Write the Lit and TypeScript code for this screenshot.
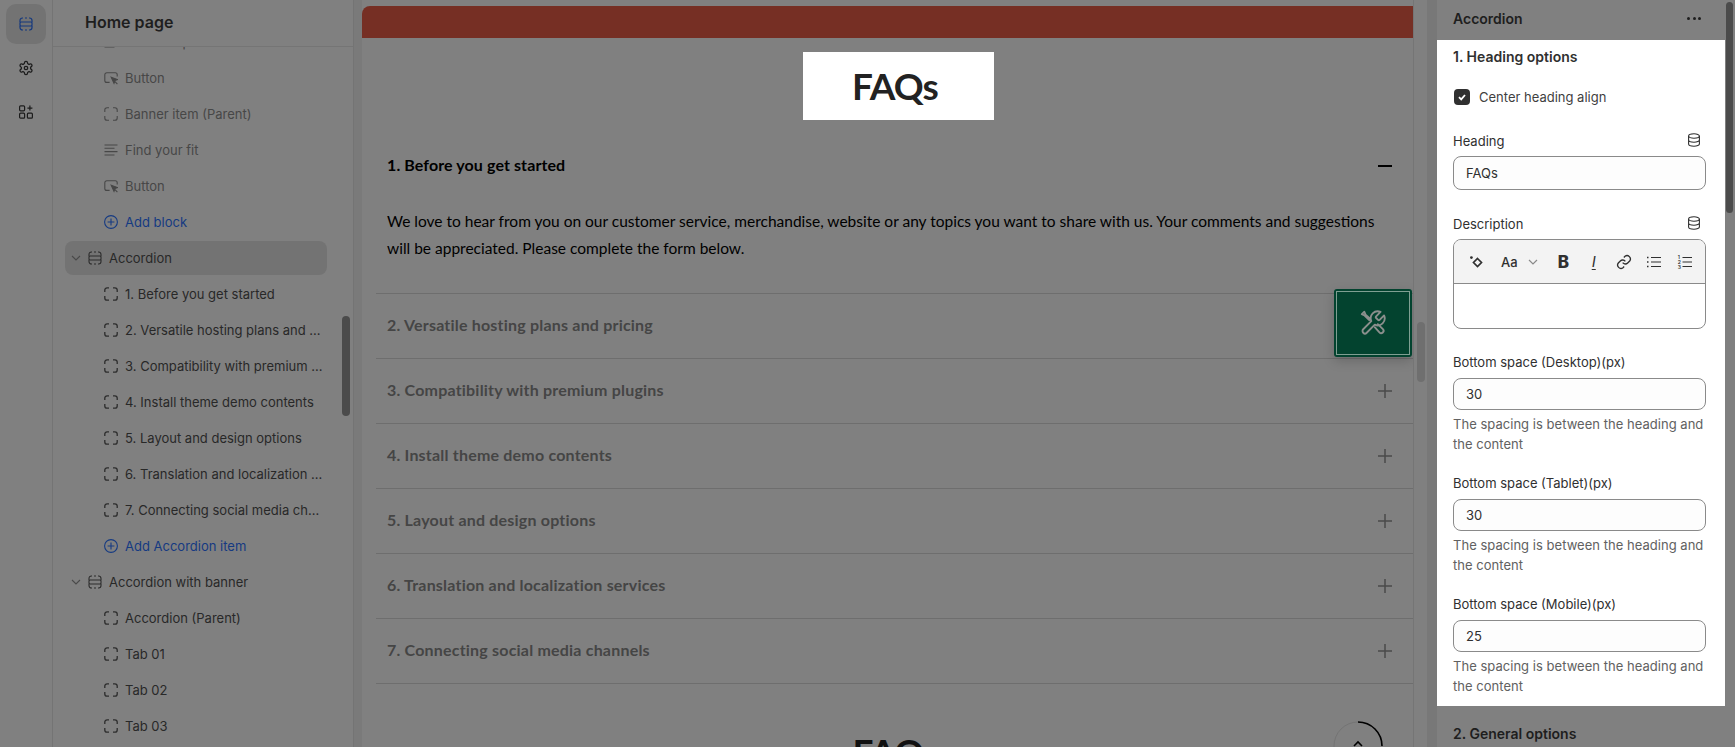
import { LitElement, html, css, svg } from "lit";
import { customElement } from "lit/decorators.js";

const block = svg`<path d="M.8 5V3.1A2.3 2.3 0 0 1 3.1.8H5M9 .8h1.9a2.3 2.3 0 0 1 2.3 2.3V5M13.2 9v1.9a2.3 2.3 0 0 1-2.3 2.3H9M5 13.2H3.1A2.3 2.3 0 0 1 .8 10.9V9"/>`;
const section = svg`<path d="M1 5.2V3.4A2.4 2.4 0 0 1 3.4 1H4M6 1h2M10 1h.6A2.4 2.4 0 0 1 13 3.4v1.8M1 8.8v1.8A2.4 2.4 0 0 0 3.4 13H4M6 13h2M10 13h.6a2.4 2.4 0 0 0 2.4-2.4V8.8"/><rect x="1" y="5" width="12" height="4" rx="1"/>`;
const cursor = svg`<path d="M5.6 11.4H2.8a2 2 0 0 1-2-2V3.8a2 2 0 0 1 2-2h8.4a2 2 0 0 1 2 2V5.6"/><path d="M7.2 6.2l6.4 2.4-2.6 1 -1 2.8z" fill="currentColor"/><path d="M11 10.6l2.4 2.6"/>`;
const lines = svg`<path d="M.5 2h13M.5 5.3h10M.5 8.6h13M.5 12h10"/>`;
const plusc = svg`<circle cx="7" cy="7" r="6.4"/><path d="M7 3.6v6.8M3.6 7h6.8"/>`;

const ic = (p: unknown, c = "ic") => html`<svg class=${c} viewBox="0 0 14 14">${p}</svg>`;

type Row = { t: string; k: "item" | "muted" | "add" | "sec" | "cur"; i?: unknown };
const rows: Row[] = [
  { t: "Discover products", k: "muted", i: lines },
  { t: "Button", k: "muted", i: cursor },
  { t: "Banner item (Parent)", k: "muted", i: block },
  { t: "Find your fit", k: "muted", i: lines },
  { t: "Button", k: "muted", i: cursor },
  { t: "Add block", k: "add", i: plusc },
  { t: "Accordion", k: "cur" },
  { t: "1. Before you get started", k: "item", i: block },
  { t: "2. Versatile hosting plans and ...", k: "item", i: block },
  { t: "3. Compatibility with premium ...", k: "item", i: block },
  { t: "4. Install theme demo contents", k: "item", i: block },
  { t: "5. Layout and design options", k: "item", i: block },
  { t: "6. Translation and localization ...", k: "item", i: block },
  { t: "7. Connecting social media ch...", k: "item", i: block },
  { t: "Add Accordion item", k: "add", i: plusc },
  { t: "Accordion with banner", k: "sec" },
  { t: "Accordion (Parent)", k: "item", i: block },
  { t: "Tab 01", k: "item", i: block },
  { t: "Tab 02", k: "item", i: block },
  { t: "Tab 03", k: "item", i: block },
];

const faqs = [
  "2. Versatile hosting plans and pricing",
  "3. Compatibility with premium plugins",
  "4. Install theme demo contents",
  "5. Layout and design options",
  "6. Translation and localization services",
  "7. Connecting social media channels",
];

const db = html`<svg class="db" viewBox="0 0 14 14"><ellipse cx="7" cy="3" rx="5.4" ry="2.2"/><path d="M1.6 3v8c0 1.2 2.4 2.2 5.4 2.2s5.4-1 5.4-2.2V3M1.6 7c0 1.2 2.4 2.2 5.4 2.2s5.4-1 5.4-2.2"/></svg>`;

@customElement("app-root")
export class AppRoot extends LitElement {
  static styles = css`
    :host { display: block; width: 1735px; height: 747px; overflow: hidden; background: #808080; font-family: Inter, "Liberation Sans", sans-serif; }
    * { box-sizing: border-box; }
    .app { display: flex; height: 747px; position: relative; }

    .rail { width: 53px; flex: none; border-right: 1px solid #747474; display: flex; flex-direction: column; align-items: center; padding-top: 4px; }
    .tile { width: 40px; height: 40px; border-radius: 10px; display: flex; align-items: center; justify-content: center; margin-bottom: 4px; color: #1c1c1c; margin-left: -1px; }
    .tile.on { background: #737373; color: #15397f; }
    .tile svg { width: 14px; height: 14px; fill: none; stroke: currentColor; stroke-width: 1.2; }

    .side { width: 301px; flex: none; height: 747px; border-right: 1px solid #747474; position: relative; overflow: hidden; }
    .side-h { height: 47px; border-bottom: 1px solid #757575; padding-left: 32px; display: flex; align-items: center; font-size: 16px; font-weight: 600; color: #1e1e1e; position: relative; z-index: 1; background: #808080; padding-bottom: 2px; }
    .list { margin-top: -23px; padding-left: 12px; }
    .row { height: 36px; display: flex; align-items: center; font-size: 13px; color: #282828; white-space: nowrap; padding-left: 39px; width: 262px; }
    .row .ic { width: 14px; height: 14px; margin-right: 7px; fill: none; stroke: currentColor; stroke-width: 1.1; flex: none; }
    .row.item .ic { color: #2c2c2c; stroke-width: 1.3; }
    .row.muted { color: #474747; }
    .row.add { color: #153a82; }
    .row.sec, .row.cur { padding-left: 5px; }
    .row.cur { background: #737373; border-radius: 8px; height: 34px; margin: 1px 0; }
    .chev { width: 12px; height: 12px; margin-right: 6px; fill: none; stroke: #4a4a4a; stroke-width: 1.1; flex: none; }
    .row.sec .ic, .row.cur .ic { margin-right: 7px; color: #2c2c2c; }
    .thumb { position: absolute; background: #4b4b4b; border-radius: 4px; }
    .thumb.s { left: 289px; width: 8px; top: 316px; height: 100px; }

    .gut { width: 8px; flex: none; background: #7a7a7a; }
    .prev { width: 1052px; flex: none; height: 747px; border-right: 1px solid #757575; position: relative; overflow: hidden; padding-top: 6px; }
    .bar { height: 32px; background: #762f24; border-radius: 8px 0 0 0; }
    .hbox { width: 191px; height: 68px; margin: 14px 0 0 441px; background: #fff; display: flex; align-items: center; justify-content: center; padding-right: 7px; }
    .h1 { font-family: Lato, sans-serif; font-weight: 700; font-size: 37px; color: #222; letter-spacing: -0.9px; line-height: 44px; }
    .qs { margin: 14px 0 0 14px; }
    .q { height: 65px; border-bottom: 1px solid #6e6e6e; display: flex; align-items: center; justify-content: space-between; padding: 0 21px 0 11px; font-family: Lato, sans-serif; font-weight: 700; font-size: 16px; color: #454545; letter-spacing: 0.2px; }
    .q span { margin-bottom: 4px; }
    .q.open { height: 64px; border: 0; color: #000; letter-spacing: 0.1px; }
    .q svg { width: 14px; height: 14px; stroke: #4a4a4a; stroke-width: 1.5; fill: none; flex: none; }
    .q.open svg { stroke: #000; stroke-width: 2; }
    .a { border-bottom: 1px solid #6e6e6e; padding: 10px 30px 0 11px; font-family: Lato, sans-serif; font-size: 15.5px; line-height: 27px; color: #000; height: 96px; white-space: nowrap; }
    .h2 { margin: 46px 0 0 16px; text-align: center; color: #111; }
    .tool { position: absolute; left: 972px; top: 289px; width: 78px; height: 68px; background: #03432f; border-radius: 3px; box-shadow: 0 4px 12px rgba(0,0,0,.18); display: flex; align-items: center; justify-content: center; }
    .tool::after { content: ""; position: absolute; inset: 2px; border: 1px solid #7f9f92; }
    .tool svg { width: 28px; height: 28px; fill: none; stroke: #8b8f8d; stroke-width: 1.6; stroke-linecap: round; stroke-linejoin: round; }
    .ring { position: absolute; left: 971px; top: 721px; width: 50px; height: 50px; fill: none; }
    .thumb.p { left: 1417px; width: 8px; top: 322px; height: 60px; background: #6f6f6f; }

    .gut2 { width: 13px; flex: none; }
    .strip { width: 10px; flex: none; height: 747px; background: #787878; }
    .right { flex: 1; position: relative; height: 747px; overflow: hidden; }
    .r-h { height: 40px; padding: 0 0 3px 16px; display: flex; align-items: center; justify-content: space-between; font-size: 14px; font-weight: 600; color: #1e1e1e; width: 288px; }
    .dots { display: flex; gap: 2.5px; margin-right: 24px; }
    .dots i { width: 3px; height: 3px; background: #1e1e1e; border-radius: 50%; }
    .panel { width: 290px; height: 666px; margin-left: -2px; background: #fff; padding: 0 19px 0 17px; border-left: 1px solid #f0f0f0; color: #303030; font-size: 13px; }
    .ph { height: 34px; display: flex; align-items: center; font-size: 14px; font-weight: 600; padding-bottom: 2px; }
    .chk { display: flex; align-items: center; gap: 9px; margin-top: 15px; height: 16px; color: #3f3f3f; padding-left: 1px; }
    .box { width: 16px; height: 16px; border-radius: 4px; background: #303030; display: flex; align-items: center; justify-content: center; }
    .box svg { width: 10px; height: 10px; fill: none; stroke: #fff; stroke-width: 1.8; }
    .lab { display: flex; justify-content: space-between; align-items: center; height: 20px; color: #303030; font-size: 13px; white-space: nowrap; }
    .db { width: 14px; height: 14px; fill: none; stroke: #303030; stroke-width: 1.1; margin-right: 5px; margin-top: -3px; }
    .f1 { margin-top: 26px; }
    .inp { height: 34px; border: 1px solid #8a8a8a; border-radius: 8px; padding-left: 12px; display: flex; align-items: center; font-size: 13px; color: #303030; margin-top: 5px; background: #fdfdfd; }
    .f2 { margin-top: 24px; }
    .ed { margin-top: 5px; height: 90px; border: 1px solid #8a8a8a; border-radius: 8px; overflow: hidden; }
    .tb { height: 44px; background: #f3f3f3; border-bottom: 1px solid #8a8a8a; display: flex; align-items: center; padding-left: 7px; color: #303030; }
    .tb > div { width: 30.3px; display: flex; align-items: center; justify-content: center; flex: none; }
    .tb svg { width: 16px; height: 16px; fill: none; stroke: #303030; stroke-width: 1.2; }
    .aa { width: 57px !important; gap: 9px; font-size: 13px; font-weight: 500; padding-left: 0; }
    .aa svg { width: 12px; height: 12px; stroke: #8a8a8a; }
    .b { font-weight: 800; font-size: 17px; }
    .i { font-family: Inter, sans-serif; font-style: italic; font-weight: 400; font-size: 15px; text-decoration: underline; text-underline-offset: 2px; text-decoration-thickness: 1px; }
    .num { font-size: 5px; fill: #303030; stroke: none; font-weight: 600; font-family: Inter, sans-serif; }
    .f3 { margin-top: 23px; }
    .f4 { margin-top: 19px; }
    .inp.n { height: 32px; margin-top: 6px; }
    .help { font-size: 13px; line-height: 20px; color: #616161; margin-top: 4px; white-space: nowrap; letter-spacing: 0.03px; }
    .next { font-size: 14px; font-weight: 600; color: #1e1e1e; margin: 19px 0 0 16px; line-height: 18px; }
    .thumb.r { left: 289px; top: 2px; width: 7px; height: 211px; }
  `;

  field(label: string, value: string, cls: string) {
    return html`<div class=${cls}>
      <div class="lab">${label}</div>
      <div class="inp n">${value}</div>
      <div class="help">The spacing is between the heading and<br />the content</div>
    </div>`;
  }

  render() {
    return html`<div class="app">
      <nav class="rail">
        <div class="tile on"><svg viewBox="0 0 14 14">${section}</svg></div>
        <div class="tile"><svg viewBox="0 0 24 24" style="stroke-width:1.9;width:16px;height:16px"><path d="M12.22 2h-.44a2 2 0 0 0-2 2v.18a2 2 0 0 1-1 1.73l-.43.25a2 2 0 0 1-2 0l-.15-.08a2 2 0 0 0-2.73.73l-.22.38a2 2 0 0 0 .73 2.73l.15.1a2 2 0 0 1 1 1.72v.51a2 2 0 0 1-1 1.74l-.15.09a2 2 0 0 0-.73 2.73l.22.38a2 2 0 0 0 2.73.73l.15-.08a2 2 0 0 1 2 0l.43.25a2 2 0 0 1 1 1.73V20a2 2 0 0 0 2 2h.44a2 2 0 0 0 2-2v-.18a2 2 0 0 1 1-1.73l.43-.25a2 2 0 0 1 2 0l.15.08a2 2 0 0 0 2.73-.73l.22-.39a2 2 0 0 0-.73-2.73l-.15-.08a2 2 0 0 1-1-1.74v-.5a2 2 0 0 1 1-1.74l.15-.09a2 2 0 0 0 .73-2.73l-.22-.38a2 2 0 0 0-2.73-.73l-.15.08a2 2 0 0 1-2 0l-.43-.25a2 2 0 0 1-1-1.73V4a2 2 0 0 0-2-2z"/><circle cx="12" cy="12" r="2.6"/></svg></div>
        <div class="tile"><svg viewBox="0 0 14 14"><rect x=".6" y=".8" width="5" height="5" rx="1"/><rect x=".6" y="8.2" width="5" height="5" rx="1"/><rect x="8.4" y="8.2" width="5" height="5" rx="1"/><path d="M10.9 .6v5M8.4 3.1h5"/></svg></div>
      </nav>

      <aside class="side">
        <div class="side-h">Home page</div>
        <div class="list">
          ${rows.map((r) => html`<div class="row ${r.k}">
            ${r.k === "sec" || r.k === "cur"
              ? html`<svg class="chev" viewBox="0 0 12 12"><path d="M2 4l4 4 4-4"/></svg>${ic(section)}`
              : ic(r.i)}
            <span>${r.t}</span>
          </div>`)}
        </div>
        <div class="thumb s"></div>
      </aside>

      <div class="gut"></div>

      <main class="prev">
        <div class="bar"></div>
        <div class="hbox"><div class="h1">FAQs</div></div>
        <div class="qs">
          <div class="q open"><span>1. Before you get started</span><svg viewBox="0 0 14 14"><path d="M0 7h14"/></svg></div>
          <div class="a">We love to hear from you on our customer service, merchandise, website or any topics you want to share with us. Your comments and suggestions<br />will be appreciated. Please complete the form below.</div>
          ${faqs.map((f) => html`<div class="q"><span>${f}</span><svg viewBox="0 0 14 14"><path d="M7 0v14M0 7h14"/></svg></div>`)}
        </div>
        <div class="h1 h2">FAQs</div>
        <div class="tool"><svg viewBox="0 0 24 24"><path d="M14.7 6.3a1 1 0 0 0 0 1.4l1.6 1.6a1 1 0 0 0 1.4 0l3.77-3.77a6 6 0 0 1-7.94 7.94l-6.91 6.91a2.12 2.12 0 0 1-3-3l6.91-6.91a6 6 0 0 1 7.94-7.94l-3.76 3.76z"/><path d="M13.5 15.6l4 4.4a2 2 0 0 0 3-2.8l-4.4-4.2M9.8 8.6L5.6 4.8 4.6 2.4 2.4 4.4l2.4 1.2 4 3.9"/></svg></div>
        <svg class="ring" viewBox="0 0 50 50"><circle cx="25" cy="25" r="24" stroke="#747474" stroke-width="1"/><path d="M25 1a24 24 0 0 1 24 24" stroke="#000" stroke-width="1.6"/><path d="M21 25l4-4 4 4" stroke="#000" stroke-width="1.6"/></svg>
      </main>

      <div class="gut2"></div>
      <div class="strip"></div>

      <section class="right">
        <div class="r-h"><span>Accordion</span><span class="dots"><i></i><i></i><i></i></span></div>
        <div class="panel">
          <div class="ph">1. Heading options</div>
          <div class="chk"><span class="box"><svg viewBox="0 0 10 10"><path d="M2 5.2l2.2 2.2L8 3"/></svg></span><span>Center heading align</span></div>
          <div class="f1"><div class="lab">Heading${db}</div><div class="inp">FAQs</div></div>
          <div class="f2"><div class="lab">Description${db}</div>
            <div class="ed"><div class="tb">
              <div><svg viewBox="0 0 16 16"><path d="M9.5 4.5l4 4-4 4-4-4z" stroke-width="1.7"/><circle cx="3.4" cy="3.6" r="1.4" fill="#303030" stroke="none"/></svg></div>
              <div class="aa"><span>Aa</span><svg viewBox="0 0 12 12"><path d="M2 4l4 4 4-4"/></svg></div>
              <div class="b">B</div>
              <div class="i">I</div>
              <div><svg viewBox="0 0 24 24" style="stroke-width:2"><path d="M10 13a5 5 0 0 0 7.5.5l3-3a5 5 0 0 0-7-7l-1.7 1.7"/><path d="M14 11a5 5 0 0 0-7.5-.5l-3 3a5 5 0 0 0 7 7l1.7-1.7"/></svg></div>
              <div><svg viewBox="0 0 16 16"><path d="M5 3.5h10M5 8h10M5 12.5h10"/><path d="M1 3.5h1.5M1 8h1.5M1 12.5h1.5" stroke-width="1.6"/></svg></div>
              <div><svg viewBox="0 0 16 16"><path d="M5.5 3.5h9.5M5.5 8h9.5M5.5 12.5h9.5"/><text class="num" x="0.8" y="5">1</text><text class="num" x="0.8" y="10">2</text><text class="num" x="0.8" y="15">3</text></svg></div>
            </div><div></div></div>
          </div>
          ${this.field("Bottom space (Desktop)(px)", "30", "f3")}
          ${this.field("Bottom space (Tablet)(px)", "30", "f4")}
          ${this.field("Bottom space (Mobile)(px)", "25", "f4")}
        </div>
        <div class="next">2. General options</div>
        <div class="thumb r"></div>
      </section>
      <div class="thumb p"></div>
    </div>`;
  }
}
